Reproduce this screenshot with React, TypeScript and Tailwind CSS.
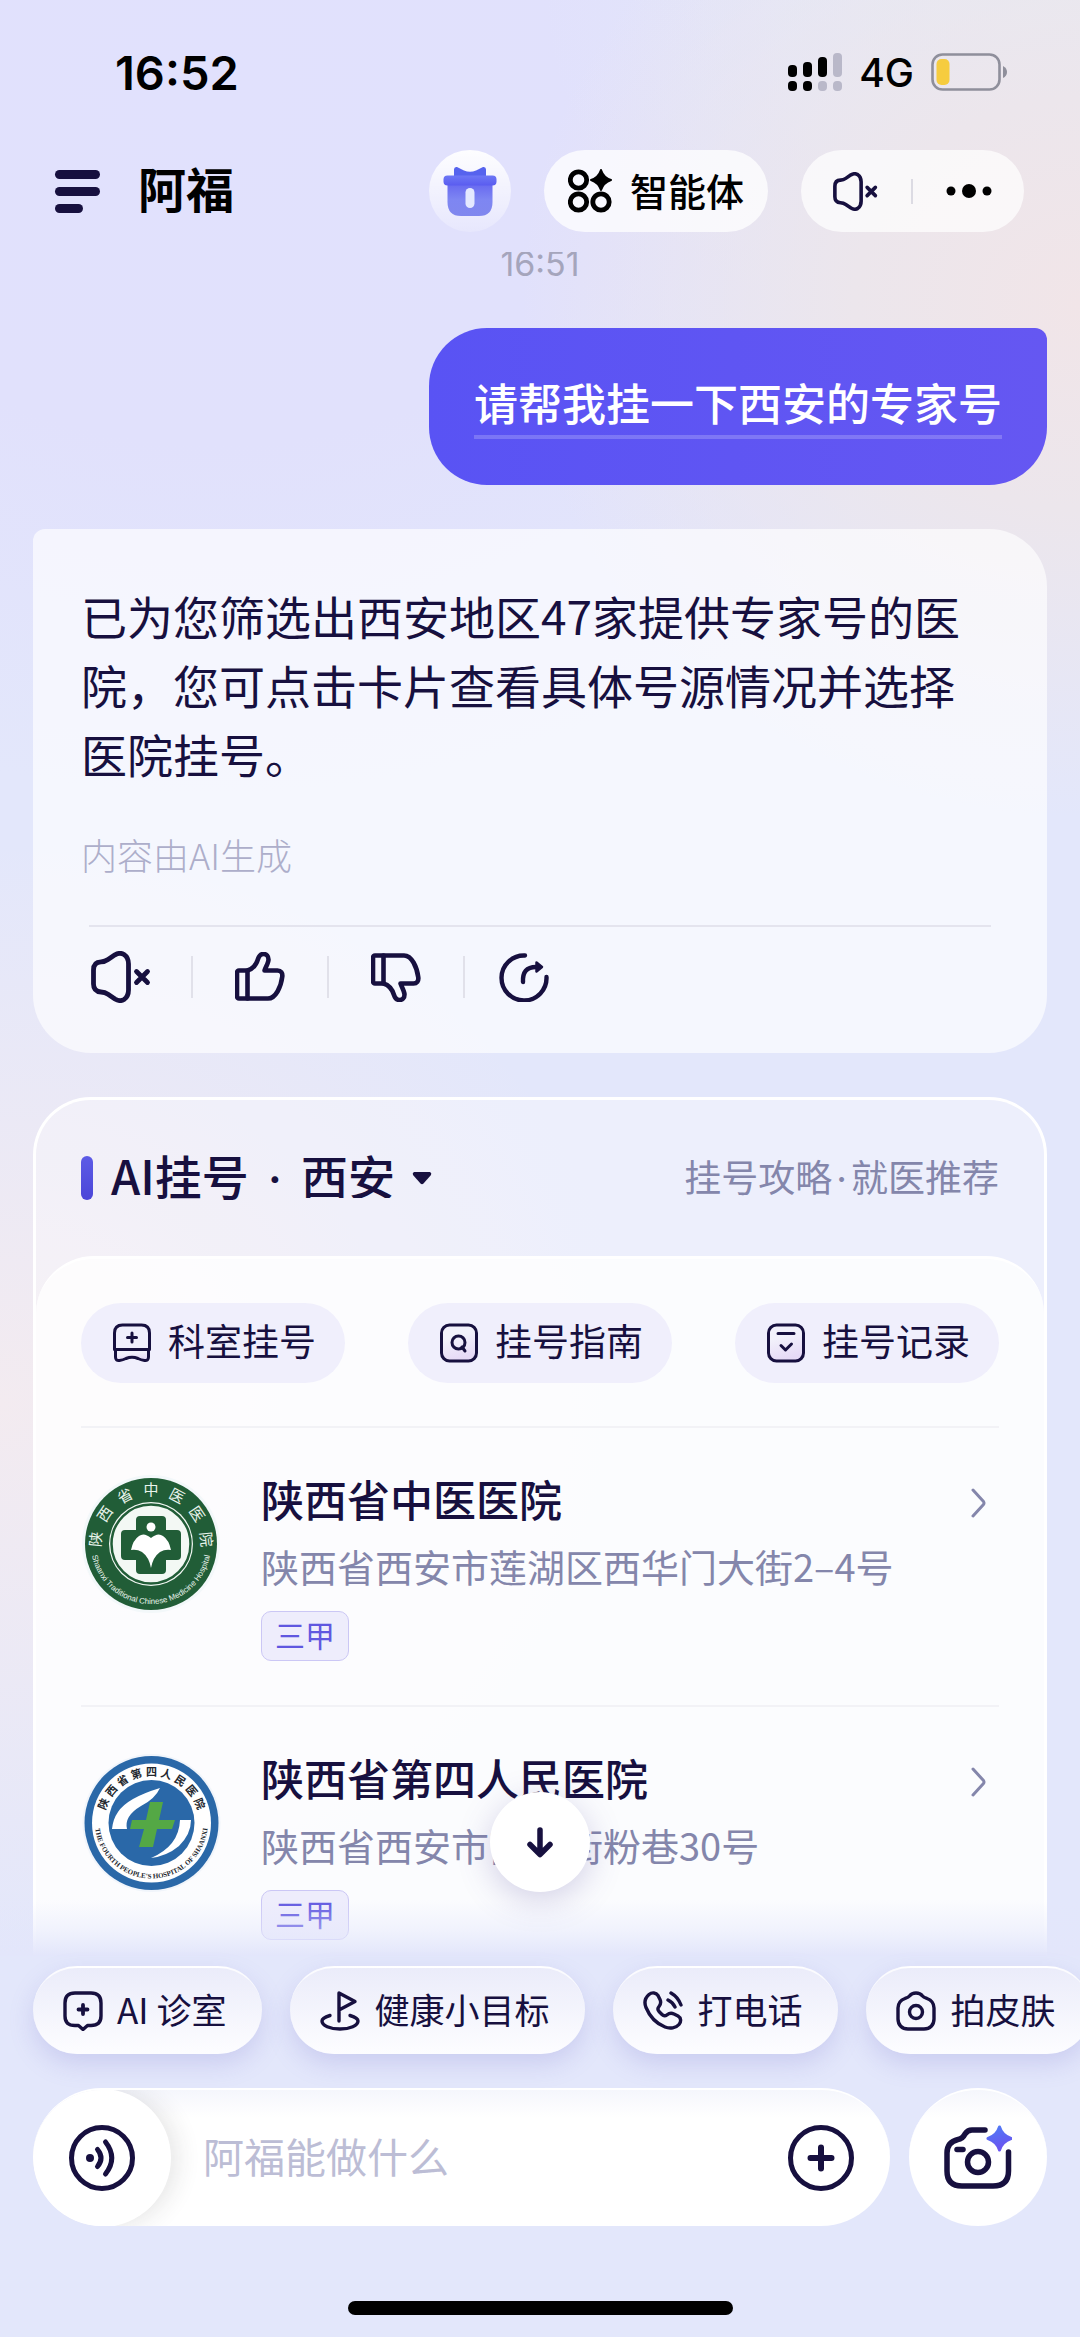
import type { ReactNode } from "react";

const INK = "#17103f";

const SpeakerOff = ({ className }: { className: string }) => (
  <svg viewBox="0 0 60 52" className={className} fill="none" stroke={INK} strokeWidth="4.8" strokeLinecap="round" strokeLinejoin="round" aria-hidden="true">
    <path d="M2.5 19Q2.5 11 10 10.8Q14 10.7 17 8.5L24 3.8Q29 1 33 3.5Q37.5 6.5 37.5 13V39Q37.5 45.5 33 48.5Q29 51 24 48L17 43.3Q14 41.2 10 41Q2.5 40.5 2.5 33Z" />
    <path d="M45.5 20.5l11 11M56.5 20.5l-11 11" />
  </svg>
);

const Thumb = ({ down = false }: { down?: boolean }) => (
  <svg viewBox="0 0 50 50" className="size-[50px]" fill="none" stroke={INK} strokeWidth="4.6" strokeLinecap="round" strokeLinejoin="round" aria-hidden="true">
    <g transform={down ? "matrix(1 0 0 -1 0 50)" : undefined}>
      <path d="M12.5 18.5H4a2 2 0 0 0-2 2v24a2 2 0 0 0 2 2h29c8 0 13-12 14.3-22 .4-3.5-1.4-6-4.8-6H29.5c2-5 4-8 4-11 0-3.4-2-5.5-5-5.5-2.6 0-4.4 1.6-5.5 5-1.5 5-5.5 10-10.5 11.5Z" />
      <path d="M12.5 18.5v28" />
    </g>
  </svg>
);

const ShareIcon = () => (
  <svg viewBox="0 0 50 50" className="size-[50px]" fill="none" stroke={INK} strokeWidth="4.4" strokeLinecap="round" strokeLinejoin="round" aria-hidden="true">
    <path d="M26 3.5A22.5 22.5 0 1 0 47.5 25" />
    <path d="M24 30c-.5-10 3.5-15 13-15" />
    <path d="M37.5 10.5l5.5 4.5-5.5 4.5z" fill={INK} strokeWidth="2.5" />
  </svg>
);

const GiftIcon = () => (
  <svg viewBox="0 0 54 50" className="h-[50px] w-[54px]" aria-hidden="true">
    <defs>
      <linearGradient id="lid" x1="0" y1="0" x2="0" y2="1">
        <stop offset="0" stopColor="#6d77f5" />
        <stop offset="1" stopColor="#5a5cf0" />
      </linearGradient>
      <linearGradient id="box" x1="0" y1="0" x2="0" y2="1">
        <stop offset="0" stopColor="#6667f0" />
        <stop offset="0.5" stopColor="#7e86f2" />
        <stop offset="1" stopColor="#8087ee" />
      </linearGradient>
    </defs>
    <path d="M11 11V3.5Q11 .5 14 1L21 4.5Q27 7 33 4.5L40 1Q43 .5 43 3.5V11z" fill="#5663ee" />
    <path d="M4.5 17H49.5V36Q49.5 50 36 50H18Q4.5 50 4.5 36z" fill="url(#box)" />
    <rect x="0.5" y="9.5" width="53" height="10" rx="4" fill="url(#lid)" />
    <rect x="22.5" y="22" width="9" height="20" rx="4.5" fill="#e4e9ff" />
  </svg>
);

const AgentsIcon = () => (
  <svg viewBox="0 0 44 44" className="size-11" aria-hidden="true">
    <g fill="none" stroke="#000" strokeWidth="4.8">
      <circle cx="10.5" cy="11" r="8.2" />
      <circle cx="10.5" cy="33" r="8.2" />
      <circle cx="33" cy="33" r="8.2" />
    </g>
    <path d="M33 1Q35.5 8.5 43 11Q35.5 13.5 33 21Q30.5 13.5 23 11Q30.5 8.5 33 1Z" stroke="#000" strokeWidth="2" strokeLinejoin="round" />
  </svg>
);

const StatusBar = () => (
  <div className="flex h-36 items-center justify-between pl-[115px] pr-[73px] font-['Inter',sans-serif] text-black">
    <span className="text-[47px] font-semibold leading-none">16:52</span>
    <div className="flex items-center gap-[17px]">
      <svg viewBox="0 0 54 38" className="h-[38px] w-[54px]" aria-hidden="true">
        <rect x="0" y="12" width="9" height="12" rx="4" />
        <rect x="15" y="9" width="9" height="15" rx="4" />
        <rect x="30" y="4" width="9" height="20" rx="4" />
        <rect x="45" y="0" width="9" height="24" rx="4" fill="#b9b8c9" />
        <rect x="0" y="28" width="9" height="10" rx="4" />
        <rect x="15" y="28" width="9" height="10" rx="4" />
        <rect x="30" y="28" width="9" height="10" rx="4" fill="#b9b8c9" />
        <rect x="45" y="28" width="9" height="10" rx="4" fill="#b9b8c9" />
      </svg>
      <span className="text-[39px] font-medium leading-none">4G</span>
      <svg viewBox="0 0 76 38" className="h-[38px] w-[76px]" aria-hidden="true">
        <rect x="1.5" y="1.5" width="67" height="35" rx="10" fill="none" stroke="#8f8f9b" strokeWidth="2.6" />
        <rect x="5.5" y="6" width="13" height="26" rx="5" fill="#f6cc3f" />
        <path d="M72 13q4 2 4 6t-4 6z" fill="#8f8f9b" />
      </svg>
    </div>
  </div>
);

const Header = () => (
  <header className="flex h-[108px] items-center pb-3.5 pl-[55px] pr-14">
    <button aria-label="菜单" className="flex flex-col items-start gap-2">
      <span className="h-[9px] w-[45px] rounded-full bg-[#17103f]" />
      <span className="h-[9px] w-[45px] rounded-full bg-[#17103f]" />
      <span className="h-[9px] w-7 rounded-full bg-[#17103f]" />
    </button>
    <h1 className="ml-[38px] pb-2 text-5xl font-bold leading-none text-black">阿福</h1>
    <div className="ml-auto flex items-center gap-[33px]">
      <button aria-label="礼物" className="flex size-[82px] items-center justify-center rounded-full bg-linear-to-b from-white/95 to-white/20">
        <GiftIcon />
      </button>
      <button className="flex h-[82px] items-center gap-[18px] rounded-full bg-white/75 px-6 text-[38px] font-medium text-black">
        <AgentsIcon />
        <span className="pb-1">智能体</span>
      </button>
      <div className="flex h-[82px] items-center rounded-full bg-white/70 px-8">
        <button aria-label="静音">
          <SpeakerOff className="h-[39px] w-[45px]" />
        </button>
        <span className="mx-[33px] h-[25px] w-0.5 bg-[#dcdbe3]" />
        <button aria-label="更多">
          <svg viewBox="0 0 46 16" className="h-4 w-[46px]" aria-hidden="true">
            <circle cx="5" cy="8" r="4.5" />
            <circle cx="23" cy="8" r="7" />
            <circle cx="41" cy="8" r="4.5" />
          </svg>
        </button>
      </div>
    </div>
  </header>
);

const VerticalRule = () => <span className="h-[42px] w-0.5 bg-[#e1e1ea]" />;

const AnswerCard = () => (
  <section className="mt-11 rounded-[58px] rounded-tl-xl bg-white/65 px-12 pt-[52px]">
    <p className="text-[46px] leading-[69px] text-[#17103f]">
      已为您筛选出西安地区47家提供专家号的医院，您可点击卡片查看具体号源情况并选择医院挂号。
    </p>
    <p className="mt-10 text-[36px] font-light leading-[52px] text-[#adaeca]">内容由AI生成</p>
    <div className="mx-2 mt-[45px] flex h-32 items-start border-t-2 border-[#e4e4ee] pl-0.5 pt-6">
      <div className="flex items-center">
        <button aria-label="朗读" className="mr-10">
          <SpeakerOff className="h-[52px] w-[60px]" />
        </button>
        <VerticalRule />
        <button aria-label="赞" className="mx-[42px]">
          <Thumb />
        </button>
        <VerticalRule />
        <button aria-label="踩" className="mx-[42px]">
          <Thumb down />
        </button>
        <VerticalRule />
        <button aria-label="分享" className="ml-[34px]">
          <ShareIcon />
        </button>
      </div>
    </div>
  </section>
);

const MiniIcon = ({ children }: { children: ReactNode }) => (
  <svg viewBox="0 0 38 40" className="h-10 w-[38px]" fill="none" stroke={INK} strokeWidth="3" strokeLinecap="round" strokeLinejoin="round" aria-hidden="true">
    <defs>
      <linearGradient id="tint" x1="0" y1="0" x2="0.3" y2="1">
        <stop offset="0.4" stopColor="#f2f1fb" />
        <stop offset="1" stopColor="#e6daf6" />
      </linearGradient>
    </defs>
    {children}
  </svg>
);

const shortcuts = [
  {
    label: "科室挂号",
    icon: (
      <MiniIcon>
        <path d="M1.5 26.5V10Q1.5 2 9.5 2H28.5Q36.5 2 36.5 10V26.5Z" />
        <path d="M2.5 26.5V34Q2.5 38 6.5 37.5Q10 37 13 35.5Q19 33 25 35.5Q28 37 31.5 37.5Q35.5 38 35.5 34V26.5Z" fill="url(#tint)" />
        <path d="M19 10v9M14.5 14.5h9" />
      </MiniIcon>
    ),
  },
  {
    label: "挂号指南",
    icon: (
      <MiniIcon>
        <rect x="1.5" y="2" width="35" height="36" rx="8" fill="url(#tint)" />
        <circle cx="18.5" cy="19.5" r="6.5" />
        <path d="M22 24l3 4" />
      </MiniIcon>
    ),
  },
  {
    label: "挂号记录",
    icon: (
      <MiniIcon>
        <rect x="1.5" y="2" width="35" height="36" rx="8" fill="url(#tint)" />
        <path d="M11 10.5h16M14 22.5l4.5 4.5 6-6" />
      </MiniIcon>
    ),
  },
];

// spreads the characters evenly along the named arc, each centred in its slot
const ArcText = ({ path, text }: { path: string; text: string }) => (
  <>
    {[...text].map((char, i) => (
      <textPath key={i} href={path} startOffset={`${((i + 0.5) / text.length) * 100}%`} textAnchor="middle">
        {char}
      </textPath>
    ))}
  </>
);

const TcmLogo = () => (
  <svg viewBox="0 0 140 140" className="size-[140px]" aria-hidden="true">
    <defs>
      <path id="tcmTop" d="M20.5 79A50 50 0 1 1 119.500 79" />
      <path id="tcmBottom" d="M10.400 78A60 60 0 0 0 129.600 78" />
    </defs>
    <circle cx="70" cy="71" r="69" fill="#f3f8fa" />
    <circle cx="70" cy="71" r="66" fill="#215d37" />
    <circle cx="70" cy="71" r="42" fill="#f3f8f4" />
    <circle cx="70" cy="71" r="39.5" fill="none" stroke="#215d37" strokeWidth="2.5" />
    <path d="M59 43H81Q85 43 85 47V57H96Q100 57 100 61V83Q100 87 96 87H85V97Q85 101 81 101H59Q55 101 55 97V87H44Q40 87 40 83V61Q40 57 44 57H55V47Q55 43 59 43Z" fill="#215d37" />
    <circle cx="70" cy="54" r="4.5" fill="#fff" />
    <path d="M70 65Q77 59 82 63Q88 67 90 77Q84 76 79 79Q72 84 70 95Q68 84 61 79Q56 76 50 77Q52 67 58 63Q63 59 70 65Z" fill="#fff" />
    <text fill="#e9f4ec" fontSize="15" fontFamily="'Noto Sans CJK SC', sans-serif">
      <ArcText path="#tcmTop" text="陕西省中医医院" />
    </text>
    <text fill="#e9f4ec" fontSize="8" fontFamily="'Liberation Sans', sans-serif">
      <textPath href="#tcmBottom" startOffset="50%" textAnchor="middle">Shaanxi Traditional Chinese Medicine Hospital</textPath>
    </text>
  </svg>
);

const FourthLogo = () => (
  <svg viewBox="0 0 140 140" className="size-[140px]" aria-hidden="true">
    <defs>
      <path id="fourthTop" d="M24 60A48 48 0 0 1 117 60" />
      <path id="fourthBottom" d="M14 70A56.500 56.500 0 0 0 127 70" />
    </defs>
    <circle cx="70.5" cy="71" r="69" fill="#f1f5fb" />
    <circle cx="70.5" cy="71" r="67" fill="#2a68a8" />
    <circle cx="70.5" cy="71" r="59.5" fill="#fff" />
    <circle cx="70.5" cy="71" r="43" fill="#2a68a8" />
    <path d="M79 36Q46 46 37 60Q32 67 31 77H46Q43 64 60 54Q74 47 79 36Z" fill="#fff" />
    <path d="M99 68H110Q110 82 98 94Q86 104 70 106Q98 94 99 68Z" fill="#fff" />
    <path d="M69 50H82L78 68H94L91 77H76L72 95H58L63 77H49L51 68H65Z" fill="#54a845" />
    <text fill="#23272e" fontSize="11" fontWeight="700" fontFamily="'Noto Sans CJK SC', sans-serif">
      <ArcText path="#fourthTop" text="陕西省第四人民医院" />
    </text>
    <text fill="#23272e" fontSize="7" fontWeight="700" fontFamily="'Liberation Serif', serif">
      <textPath href="#fourthBottom" startOffset="50%" textAnchor="middle">THE FOURTH PEOPLE'S HOSPITAL OF SHAANXI</textPath>
    </text>
  </svg>
);

const hospitals = [
  { name: "陕西省中医医院", address: "陕西省西安市莲湖区西华门大街2–4号", level: "三甲", logo: <TcmLogo /> },
  { name: "陕西省第四人民医院", address: "陕西省西安市南大街粉巷30号", level: "三甲", logo: <FourthLogo /> },
];

const BookingCard = () => (
  <section className="mt-11 rounded-t-[58px] border-[3px] border-b-0 border-white bg-white/35">
    <div className="flex h-[156px] items-center justify-between px-[45px]">
      <div className="flex items-center text-[47px] font-medium text-[#17103f]">
        <span className="mr-[18px] h-11 w-3 rounded-full bg-linear-to-b from-[#5d5be6] to-[#4b46d8]" />
        <h2 className="pb-2 leading-none">AI挂号</h2>
        <span className="mx-[19px] font-['Inter',sans-serif] leading-none">·</span>
        <label className="flex items-center gap-4">
          <select aria-label="城市" className="appearance-none bg-transparent p-0 pb-2 leading-none outline-none">
            <option>西安</option>
          </select>
          <svg viewBox="0 0 22 16" className="h-4 w-[22px]" aria-hidden="true">
            <path d="M3 2H19Q21 3 20 5L12.5 13.5Q11 15 9.5 13.5L2 5Q1 3 3 2Z" fill={INK} />
          </svg>
        </label>
      </div>
      <a href="#guide" className="pb-0.5 text-[37px] leading-none text-[#8486ab]">
        挂号攻略<span className="mx-1 font-['Inter',sans-serif]">·</span>就医推荐
      </a>
    </div>

    <div className="rounded-t-[58px] border-t-[3px] border-white bg-white/80 px-[45px] pt-11">
      <div className="flex justify-between">
        {shortcuts.map((s) => (
          <button key={s.label} className="flex h-20 items-center gap-[17px] rounded-full bg-[#f0effc] pl-8 pr-[29px] text-[37px] text-[#17103f]">
            {s.icon}
            <span className="pb-1">{s.label}</span>
          </button>
        ))}
      </div>
      <ul className="mt-[43px]">
        {hospitals.map((h) => (
          <li key={h.name} className="flex items-start border-t-2 border-[#f2f2f6] pb-11 pt-[45px]">
            {h.logo}
            <div className="-mt-[3px] ml-10 min-w-0 flex-1">
              <h3 className="text-[43px] font-medium leading-[56px] text-[#17103f]">{h.name}</h3>
              <p className="mt-4 text-[38px] leading-[48px] text-[#8486ab]">{h.address}</p>
              <span className="mt-[21px] block w-fit rounded-[10px] border border-[#cbc7f5] bg-[#eeedfc] px-[13px] pb-1 text-[30px] leading-[44px] text-[#6057e0]">
                {h.level}
              </span>
            </div>
            <svg viewBox="0 0 16 30" className="mr-3 mt-[15px] h-[30px] w-4" fill="none" stroke="#8486ab" strokeWidth="3" strokeLinecap="round" strokeLinejoin="round" aria-hidden="true">
              <path d="M2 2L12.5 13.5Q13.5 15 12.5 16.5L2 28" />
            </svg>
          </li>
        ))}
      </ul>
    </div>
  </section>
);

const ToolIcon = ({ children }: { children: ReactNode }) => (
  <svg viewBox="0 0 40 40" className="size-10" fill="none" stroke={INK} strokeWidth="3.4" strokeLinecap="round" strokeLinejoin="round" aria-hidden="true">
    {children}
  </svg>
);

const tools = [
  {
    label: "AI 诊室",
    icon: (
      <ToolIcon>
        <path d="M12 2H28Q38 2 38 12V25Q38 34.5 28 34.5H24.5L20 38.5L15.5 34.5H12Q2 34.5 2 25V12Q2 2 12 2Z" />
        <path d="M20 14v9M15.5 18.5h9" strokeWidth="3.8" />
      </ToolIcon>
    ),
  },
  {
    label: "健康小目标",
    icon: (
      <ToolIcon>
        <path d="M19 30V2L35 10.5 19 19" />
        <path d="M10 24.5C5 26 2 27.5 2 30c0 4.5 8 8 18 8s18-3.5 18-8c0-2.5-3-4-8-5.5" />
      </ToolIcon>
    ),
  },
  {
    label: "打电话",
    icon: (
      <ToolIcon>
        <path d="M6 3.5C9 1 13 1.5 15 4.5l2 4c1.5 3 .5 5-1 7-1.5 1.8-1.3 3.5 0 5l3 3c1.6 1.6 3.2 1.6 5 .3 2-1.5 4.3-2 7-.8l4 2c3 1.8 3.5 5.5 1 8.5-3 3.5-9 4.5-14 2.5C13 32.5 6.5 25 3 16.5 1 11.5 2.5 6.5 6 3.5Z" />
        <path d="M28 2Q35 6 38 14M25 9Q30 11.5 32 16" />
      </ToolIcon>
    ),
  },
  {
    label: "拍皮肤",
    icon: (
      <ToolIcon>
        <path d="M20 2c4 0 5 1 6.5 3 1 1.3 2.5 1.8 4.5 2.5 4.5 1.7 7 5 7 9.5V28c0 6-4 10-10 10H12C6 38 2 34 2 28V17c0-4.5 2.5-7.8 7-9.5 2-.7 3.5-1.2 4.5-2.5C15 3 16 2 20 2Z" />
        <circle cx="20" cy="21" r="6.5" />
      </ToolIcon>
    ),
  },
];

const Composer = () => (
  <footer className="relative flex flex-col px-[33px] pb-[22px] pt-2.5">
    <div className="flex gap-7">
      {tools.map((t) => (
        <button
          key={t.label}
          className="flex h-[88px] shrink-0 items-center gap-3.5 rounded-full border-t-2 border-white/80 bg-linear-to-b from-[#ebecfa] to-[#fdfdff] pl-[30px] pr-9 text-[35px] text-[#17103f] shadow-[0_10px_24px_rgba(120,115,205,0.22)]"
        >
          {t.icon}
          <span className="pb-1">{t.label}</span>
        </button>
      ))}
    </div>

    <div className="mt-[34px] flex gap-[19px]">
      <div className="flex h-[138px] min-w-0 flex-1 items-center overflow-hidden rounded-full border-t-2 border-white bg-linear-to-b from-[#f5f6fc] to-white to-20%">
        <button aria-label="语音" className="flex size-[138px] shrink-0 items-center justify-center rounded-full bg-white shadow-[6px_0_24px_rgba(40,40,40,0.12)]">
          <svg viewBox="0 0 68 68" className="size-[68px]" fill="none" stroke={INK} strokeWidth="5" strokeLinecap="round" aria-hidden="true">
            <circle cx="34" cy="34" r="30.5" />
            <circle cx="22" cy="34" r="4" fill={INK} stroke="none" />
            <path d="M29.5 25.5Q36.5 34 29.5 42.5M37.5 18Q50 34 37.5 50" />
          </svg>
        </button>
        <input
          aria-label="消息"
          placeholder="阿福能做什么"
          className="ml-8 h-16 min-w-0 flex-1 bg-transparent pb-1.5 text-[41px] text-[#17103f] outline-none placeholder:text-[#bcbdd5]"
        />
        <button aria-label="添加" className="mr-[35px] shrink-0">
          <svg viewBox="0 0 68 68" className="size-[68px]" fill="none" stroke={INK} strokeWidth="5" strokeLinecap="round" aria-hidden="true">
            <circle cx="34" cy="34" r="30.5" />
            <path d="M34 23.5v21M23.5 34h21" strokeWidth="6" />
          </svg>
        </button>
      </div>
      <button aria-label="拍照" className="flex size-[138px] shrink-0 items-center justify-center rounded-full border-t-2 border-white bg-linear-to-b from-[#f5f6fc] to-white to-20%">
        <svg viewBox="0 0 68 66" className="h-[66px] w-[68px]" fill="none" stroke={INK} strokeWidth="5.5" strokeLinecap="round" strokeLinejoin="round" aria-hidden="true">
          <defs>
            <linearGradient id="spark" x1="0" y1="0" x2="0.3" y2="1">
              <stop offset="0" stopColor="#4f7cf6" />
              <stop offset="1" stopColor="#6a55f0" />
            </linearGradient>
          </defs>
          <path d="M41 5H28Q23.5 5 21 9Q18.5 14 14 14.5Q3 17 3 28V46Q3 61 18 61H49Q64.5 61 64.5 46V27" />
          <circle cx="34" cy="37" r="10.5" />
          <path d="M13 24.5h6" />
          <path d="M55.5 2Q58 10.5 67 13.5Q58 16.5 55.5 25Q53 16.5 44 13.5Q53 10.5 55.5 2Z" fill="url(#spark)" stroke="url(#spark)" strokeWidth="3" />
        </svg>
      </button>
    </div>

    <div className="mx-auto mt-[75px] h-3.5 w-[385px] rounded-full bg-black" />
  </footer>
);

export default function App() {
  return (
    <div className="flex h-screen flex-col overflow-hidden bg-[#e3e7fb] bg-[radial-gradient(52%_22%_at_100%_13%,#f1e5e8_0%,#ece6ec_40%,transparent_100%),radial-gradient(50%_16%_at_100%_0%,#e6ebf4_0%,transparent_100%),radial-gradient(80%_30%_at_20%_4%,#e1e1fd_0%,#e1e1fc_50%,transparent_100%),radial-gradient(60%_24%_at_0%_60%,#f3ebf0_0%,transparent_100%)] font-['Noto_Sans_CJK_SC',sans-serif]">
      <StatusBar />
      <Header />
      <div className="relative min-h-0 flex-1">
        <main className="h-full overflow-hidden px-[33px]">
          <time className="-mt-2 block text-center font-['Inter',sans-serif] text-[34px] leading-10 text-[#a5a5bc]">16:51</time>
          <div className="mt-11 flex justify-end">
            <div className="rounded-[58px] rounded-tr-xl bg-linear-to-r from-[#5953f4] to-[#6557f2] px-[45px] pb-[46px] pt-11">
              <p className="border-b-4 border-white/20 pb-[3px] text-[44px] font-medium leading-[60px] text-white">请帮我挂一下西安的专家号</p>
            </div>
          </div>
          <AnswerCard />
          <BookingCard />
        </main>
        <div className="pointer-events-none absolute inset-x-0 bottom-0 h-14 bg-linear-to-b from-[#e3e6fb]/0 via-[#e3e6fb]/40 via-50% to-[#e3e6fb]" />
        <button aria-label="回到底部" className="absolute bottom-16 left-1/2 flex size-[100px] -translate-x-1/2 items-center justify-center rounded-full bg-white shadow-[0_8px_32px_rgba(90,80,160,0.25)]">
          <svg viewBox="0 0 28 32" className="h-8 w-7" fill="none" stroke={INK} strokeWidth="5.5" strokeLinecap="round" strokeLinejoin="round" aria-hidden="true">
            <path d="M14 4v24M4 18.5l10 10 10-10" />
          </svg>
        </button>
      </div>
      <Composer />
    </div>
  );
}
